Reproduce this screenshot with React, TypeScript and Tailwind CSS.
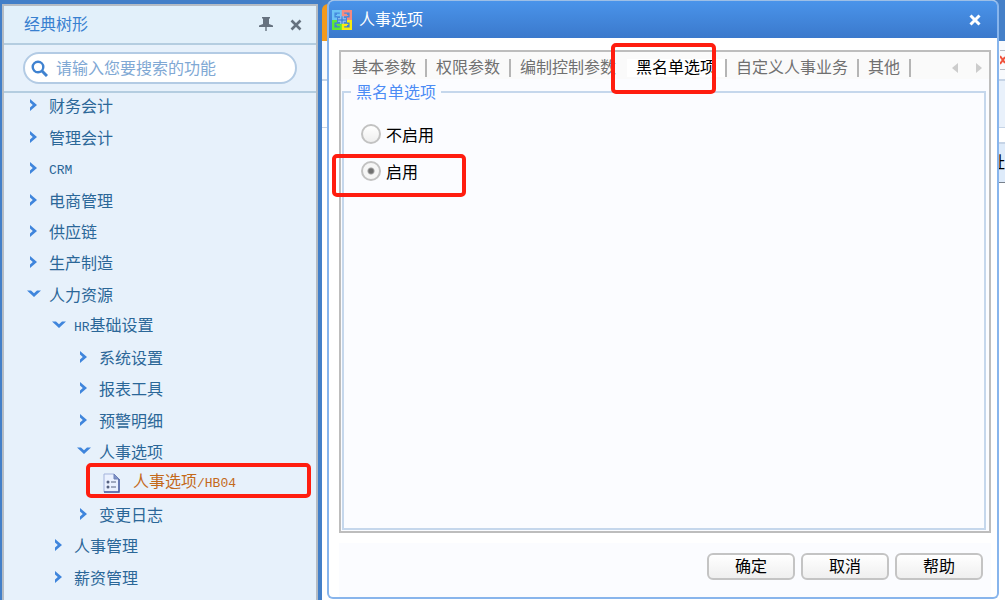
import { memo, useState, ReactNode } from 'react';
import classNames from 'clsx';

interface TreeItem {
  label: string,
  latin?: string,
  level: number,
  open?: boolean,
}

const treeBefore: TreeItem[] = [
  { label: '财务会计', level: 0 },
  { label: '管理会计', level: 0 },
  { label: '', latin: 'CRM', level: 0 },
  { label: '电商管理', level: 0 },
  { label: '供应链', level: 0 },
  { label: '生产制造', level: 0 },
  { label: '人力资源', level: 0, open: true },
  { label: '基础设置', latin: 'HR', level: 1, open: true },
  { label: '系统设置', level: 2 },
  { label: '报表工具', level: 2 },
  { label: '预警明细', level: 2 },
  { label: '人事选项', level: 2, open: true },
];

const treeAfter: TreeItem[] = [
  { label: '变更日志', level: 2 },
  { label: '人事管理', level: 1 },
  { label: '薪资管理', level: 1 },
];

const tabs = ['基本参数', '权限参数', '编制控制参数', '黑名单选项', '自定义人事业务', '其他'];

const levelPadding = ['pl-[23px]', 'pl-[48px]', 'pl-[73px]'];

const Highlight = ({ className }: { className: string }) => (
  <span
    className={classNames('absolute z-10 border-4 border-[#ff1d0f] rounded-[5px] pointer-events-none', className)}
  />
);

const Chevron = ({ open }: { open?: boolean }) => (
  <svg width="14" height="12" viewBox="0 0 14 12" className="mb-1 shrink-0">
    <path
      d={open ? 'M0 2.500h4L7 5.200l3-2.700h4L7 9z' : 'M3 0v3.500L5.800 6 3 8.500V12l7-6z'}
      fill="#3f85dc"
    />
  </svg>
);

const TreeNode = memo<TreeItem>(({ label, latin, level, open }) => (
  <li className="flex-1 flex">
    <button
      type="button"
      className={classNames('w-full flex items-center gap-2 pb-[3px] text-[#2b6798]', levelPadding[level])}
    >
      <Chevron open={open} />
      <span className="leading-5">
        {latin && <span className="font-['Liberation_Mono'] text-[13px] font-medium">{latin}</span>}
        {label}
      </span>
    </button>
  </li>
));

const DocumentIcon = () => (
  <svg width="17" height="20" viewBox="0 0 17 20" className="shrink-0">
    <path d="M1 1h10l5 5v13H1z" fill="#eaf1ff" stroke="#a3b3dc" />
    <path d="M11 1v5h5z" fill="#7f92c8" stroke="#6f82b8" />
    <path d="M16 6v13H1" fill="none" stroke="#4a5ea0" strokeWidth="1.500" />
    <circle cx="5" cy="9" r="1.500" fill="#55617f" />
    <circle cx="5" cy="14" r="1.500" fill="#55617f" />
    <path d="M8 9h5M8 14h5" stroke="#55617f" />
  </svg>
);

const Sidebar = () => (
  <aside className="w-[316px] shrink-0 mt-1 ml-[2px] flex flex-col bg-[#e7f1fb] border-2 border-b-0 border-[#b5bcc4]">
    <header className="h-[39px] shrink-0 flex items-center justify-between pl-[20px] pr-[14px] bg-[#e2f0fa] border-b-2 border-[#b4cde0]">
      <h2 className="text-[#3880d0]">经典树形</h2>
      <div className="flex items-center gap-[17px]">
        <button type="button" aria-label="固定">
          <svg width="14" height="14" viewBox="0 0 14 14" className="block mb-[2px]">
            <path d="M3 0h8v1.500h-1V7l4 1.500V10H7.700v4H6.300v-4H0V8.500L4 7V1.500H3z" fill="#66727f" />
          </svg>
        </button>
        <button type="button" aria-label="关闭">
          <svg width="12" height="12" viewBox="0 0 12 12" className="block">
            <path d="M1.500 1.500l9 9m0-9l-9 9" stroke="#66727f" strokeWidth="2.600" />
          </svg>
        </button>
      </div>
    </header>
    <div className="h-[48px] shrink-0 px-[19px] flex items-center border-b-2 border-[#b4cde0]">
      <label className="w-full h-[32px] flex items-center gap-2 pl-[6px] bg-white border-2 border-[#b3cbe4] rounded-full">
        <svg width="17" height="17" viewBox="0 0 17 17" className="shrink-0">
          <circle cx="7" cy="7" r="5.300" fill="none" stroke="#3f82d0" strokeWidth="2.400" />
          <path d="M11 11l5 5" stroke="#3f82d0" strokeWidth="3" />
        </svg>
        <input
          type="text"
          aria-label="搜索"
          placeholder="请输入您要搜索的功能"
          className="w-full min-w-0 pt-[2px] outline-none bg-transparent placeholder:text-[#80a8d4]"
        />
      </label>
    </div>
    <ul className="flex-1 flex flex-col pb-1">
      {treeBefore.map((item) => <TreeNode key={item.latin || item.label} {...item} />)}
      <li className="relative flex-1 flex">
        <Highlight className="left-[82px] right-[5px] -top-[7px] h-[35px]" />
        <a href="#hb04" className="w-full flex items-center gap-[13px] pl-[99px] pb-[5px] text-[#c4691a]">
          <DocumentIcon />
          <span className="leading-5">
            人事选项
            <span className="font-['Liberation_Mono'] text-[13px] font-medium">/HB04</span>
          </span>
        </a>
      </li>
      {treeAfter.map((item) => <TreeNode key={item.label} {...item} />)}
    </ul>
  </aside>
);

// The part of the main window that stays visible around the dialog
const Workspace = () => (
  <div className="h-full flex flex-col bg-white">
    <div className="h-[41px] shrink-0 bg-[#4580c8]">
      <div className="w-[60px] h-full pt-1">
        <div className="h-full max-h-[37px] bg-[#f39a1d] rounded-tl-[6px]" />
      </div>
    </div>
    <div className="h-[40px] shrink-0 flex justify-end items-center bg-[#f8fafd] border-b-2 border-[#c6d4e6]">
      <div className="h-[20px] w-[5px] flex items-center overflow-hidden border-y border-[#b8bcc4]">
        <svg width="5" height="10" viewBox="0 0 5 10">
          <path d="M0 1l5 7M0 9l5-7" stroke="#f0523c" strokeWidth="2" />
        </svg>
      </div>
    </div>
    <div className="h-[47px] shrink-0 flex justify-end border-b border-[#c6d4e6]">
      <div className="w-[20px] bg-[#e9f1fb]" />
    </div>
    <div className="h-[16px] shrink-0 flex justify-end">
      <div className="w-[20px] border-b-2 border-[#c6d4e6]" />
    </div>
    <div className="h-[39px] shrink-0 flex justify-end">
      <div className="flex items-center bg-[#deebfa] border-b border-[#77808c] text-black">址</div>
    </div>
  </div>
);

const Logo = () => (
  <svg width="20" height="20" viewBox="0 0 20 20" fill="none" strokeWidth="2.400">
    <path d="M5 5h4V1.200H1.200v7.600H5M5 5v1" stroke="#6cc4f5" />
    <path d="M15 5h-4V1.200h7.800v7.600H15M15 5v1" stroke="#f58a80" />
    <path d="M5 15h4v3.800H1.200v-7.600H5M5 15v-1" stroke="#5fe835" />
    <path d="M15 15h-4v3.800h7.800v-7.600H15M15 15v-1" stroke="#f8ea10" />
    <path d="M6 8.800h2.800V6M14 8.800h-2.800V6M6 11.200h2.800V14M14 11.200h-2.800V14" stroke="#a9cdf3" strokeWidth="1" />
  </svg>
);

interface RadioProps {
  checked: boolean,
  onChange: () => void,
  children: ReactNode,
}

const Radio = ({ checked, onChange, children }: RadioProps) => (
  <label className="h-[37px] flex items-center gap-[5px] pl-[17px] text-black">
    <input
      type="radio"
      name="blacklist"
      checked={checked}
      onChange={onChange}
      className="appearance-none w-[20px] h-[20px] mb-1 rounded-full border-2 border-[#c2c2c2] bg-linear-to-b from-white to-[#eeeeee] checked:bg-[radial-gradient(circle,#707070_2px,#a0a0a0_3px,#f6f6f6_4px)]"
    />
    {children}
  </label>
);

const Dialog = () => {
  const [activeTab, setActiveTab] = useState<string>('黑名单选项');
  const [enabled, setEnabled] = useState<boolean>(true);

  return (
    <section
      role="dialog"
      aria-label="人事选项"
      className="absolute left-[5px] right-[6px] top-0 bottom-[1px] flex flex-col bg-white border-2 border-t-0 border-[#88b5ec] rounded-[6px]"
    >
      <header className="h-[38px] shrink-0 flex items-center justify-between pl-[3px] pr-[16px] bg-linear-to-b from-[#4a94ea] to-[#3b79cc] border-t border-[#9dbfe6] rounded-t-[5px]">
        <div className="flex items-center gap-[7px]">
          <Logo />
          <h1 className="text-white">人事选项</h1>
        </div>
        <button type="button" aria-label="关闭">
          <svg width="12" height="12" viewBox="0 0 12 12" className="block">
            <path d="M1.500 1.500l9 9m0-9l-9 9" stroke="#fff" strokeWidth="3" />
          </svg>
        </button>
      </header>

      <div className="flex-1 flex flex-col mt-[12px] ml-[10px] mr-[6px] bg-[#fbfcff] border-2 border-[#bdbdbd]">
        <div className="h-[27px] shrink-0 flex items-center justify-between pt-1 pl-[2px] pr-[7px] bg-[#fafafa]">
          <div role="tablist" className="flex">
            {tabs.map((tab) => (
              <div key={tab} className="relative">
                <button
                  type="button"
                  role="tab"
                  aria-selected={tab === activeTab}
                  onClick={() => setActiveTab(tab)}
                  className={classNames(
                    'h-[18px] px-[9px] flex items-center border-r-2 whitespace-nowrap',
                    tab === '编制控制参数' ? 'border-transparent' : 'border-[#b5b5b5]',
                    tab === activeTab ? 'bg-white text-black' : 'text-[#707070]',
                  )}
                >
                  {tab}
                </button>
                {tab === activeTab && <Highlight className="-left-[16px] right-[11px] -top-[16px] h-[51px]" />}
              </div>
            ))}
          </div>
          <div className="flex gap-[16px]">
            <button type="button" aria-label="向左">
              <svg width="7" height="10" viewBox="0 0 7 10" className="block">
                <path d="M6 0v10L0 5z" fill="#cccccc" />
              </svg>
            </button>
            <button type="button" aria-label="向右">
              <svg width="7" height="10" viewBox="0 0 7 10" className="block">
                <path d="M1 0v10l6-5z" fill="#cccccc" />
              </svg>
            </button>
          </div>
        </div>
        <fieldset className="flex-1 mt-[2px] ml-[1px] mr-[3px] mb-[1px] border-2 border-[#c5d7ec]">
          <legend className="ml-[7px] px-[5px] pt-[2px] leading-5 text-[#4c8cf5]">黑名单选项</legend>
          <div className="relative mt-[14px]">
            <Radio checked={!enabled} onChange={() => setEnabled(false)}>不启用</Radio>
            <Radio checked={enabled} onChange={() => setEnabled(true)}>启用</Radio>
            <Highlight className="-left-[12px] w-[134px] top-[37px] h-[43px]" />
          </div>
        </fieldset>
      </div>

      <footer className="h-[54px] shrink-0 flex justify-end gap-[6px] mt-[10px] ml-[10px] mr-[6px] pt-[10px] pr-[8px] bg-[#fbfcff]">
        {['确定', '取消', '帮助'].map((name) => (
          <button
            key={name}
            type="button"
            className="w-[88px] h-[27px] flex justify-center items-center text-black bg-linear-to-b from-white to-[#efefef] border-2 border-[#c4c4c4] rounded-[6px]"
          >
            {name}
          </button>
        ))}
      </footer>
    </section>
  );
};

const App = () => (
  <div className="min-h-screen flex bg-[#437fc8] font-['Liberation_Sans','Noto_Sans_CJK_SC',sans-serif] text-[16px] leading-6">
    <Sidebar />
    <main className="relative flex-1 ml-1">
      <Workspace />
      <Dialog />
    </main>
  </div>
);

export default App;
